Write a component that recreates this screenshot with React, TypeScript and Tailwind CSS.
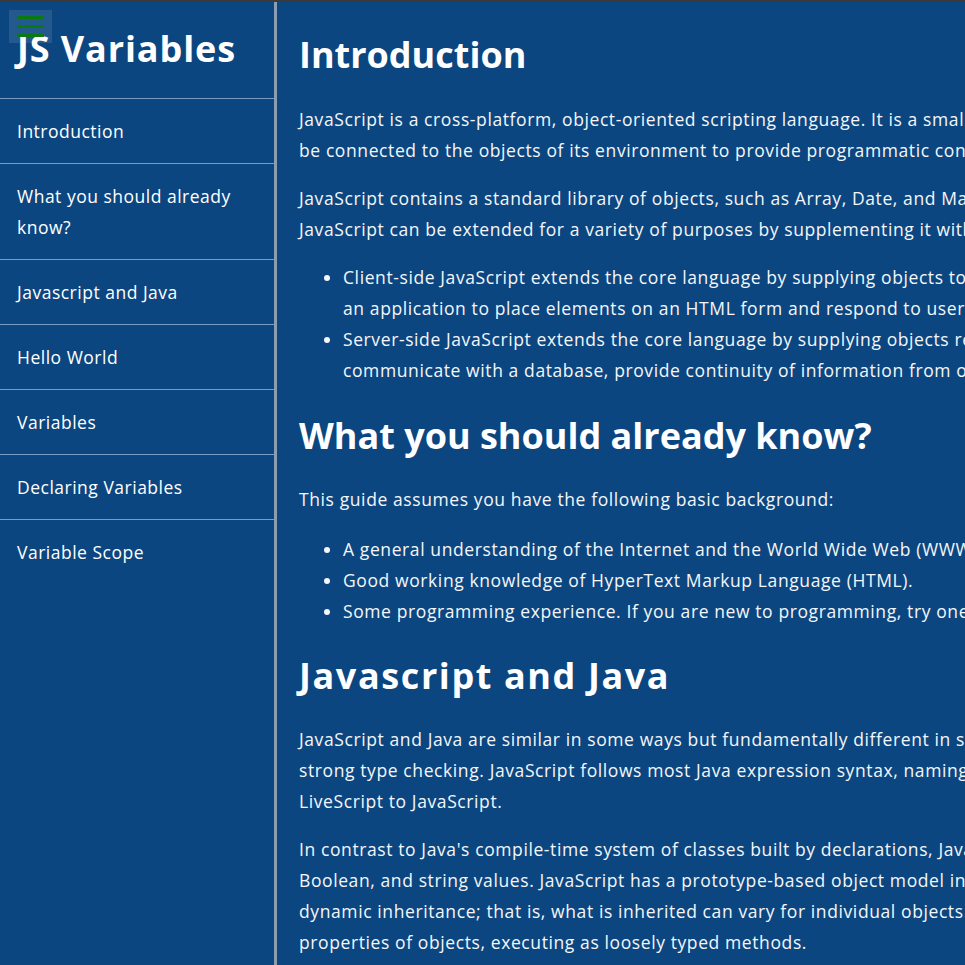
const navItems = [
  "Introduction",
  "What you should already know?",
  "Javascript and Java",
  "Hello World",
  "Variables",
  "Declaring Variables",
  "Variable Scope",
];

// each string is one rendered line; the page is wider than the window
const intro = [
  [
    "JavaScript is a cross-platform, object-oriented scripting language. It is a small and lightweight language. Inside a host environment (for example, a web browser), JavaScript can",
    "be connected to the objects of its environment to provide programmatic control over them.",
  ],
  [
    "JavaScript contains a standard library of objects, such as Array, Date, and Math, and a core set of language elements such as operators, control structures, and statements. Core",
    "JavaScript can be extended for a variety of purposes by supplementing it with additional objects; for example:",
  ],
];

const introList = [
  [
    "Client-side JavaScript extends the core language by supplying objects to control a browser and its Document Object Model (DOM). For example, client-side extensions allow",
    "an application to place elements on an HTML form and respond to user events such as mouse clicks, form input, and page navigation.",
  ],
  [
    "Server-side JavaScript extends the core language by supplying objects relevant to running JavaScript on a server. For example, server-side extensions allow an application to",
    "communicate with a database, provide continuity of information from one invocation to another of the application, or perform file manipulations on a server.",
  ],
];

const knowList = [
  "A general understanding of the Internet and the World Wide Web (WWW).",
  "Good working knowledge of HyperText Markup Language (HTML).",
  "Some programming experience. If you are new to programming, try one of the tutorials linked on the main page about JavaScript.",
];

const javaParas = [
  [
    "JavaScript and Java are similar in some ways but fundamentally different in some others. The JavaScript language resembles Java but does not have Java's static typing and",
    "strong type checking. JavaScript follows most Java expression syntax, naming conventions and basic control-flow constructs which was the reason why it was renamed from",
    "LiveScript to JavaScript.",
  ],
  [
    "In contrast to Java's compile-time system of classes built by declarations, JavaScript supports a runtime system based on a small number of data types representing numeric,",
    "Boolean, and string values. JavaScript has a prototype-based object model instead of the more common class-based object model. The prototype-based model provides",
    "dynamic inheritance; that is, what is inherited can vary for individual objects. JavaScript also supports functions without any special declarative requirements. Functions can be",
    "properties of objects, executing as loosely typed methods.",
  ],
];

function Lines({ lines }: { lines: string[] }) {
  return (
    <>
      {lines.map((l) => (
        <span key={l} className="block whitespace-nowrap">
          {l}
        </span>
      ))}
    </>
  );
}

function Para({ lines, className = "" }: { lines: string[]; className?: string }) {
  return (
    <p className={className}>
      <Lines lines={lines} />
    </p>
  );
}

export default function App() {
  return (
    <div
      className="flex h-[965px] overflow-hidden border-t-2 border-[#3a3a3a] bg-[#0c4680] text-[17.5px] leading-[31px] tracking-[0.6px] text-[#f4f6f9]"
      style={{ fontFamily: '"Open Sans", Arial, sans-serif' }}
    >
      <aside className="relative w-[277px] shrink-0 border-r-[3px] border-[#8d9db1] tracking-[0.5px]">
        <button className="absolute left-[9px] top-[8px] flex h-[33px] w-[43px] flex-col items-center justify-center gap-[6px] bg-white/10">
          <span className="h-[3px] w-[27px] bg-[#087a10]" />
          <span className="h-[3px] w-[27px] bg-[#087a10]" />
          <span className="h-[3px] w-[27px] bg-[#087a10]" />
        </button>
        <h1 className="flex h-[96px] items-center pl-[17px] pb-[2px] text-[36px] font-bold leading-none tracking-[0.9px] text-white">
          JS Variables
        </h1>
        <nav>
          {navItems.map((item) => (
            <a
              key={item}
              href="#"
              className="block border-t border-[#7a9cc2] py-[16.5px] pl-[17px] pr-[20px] text-white"
            >
              {item}
            </a>
          ))}
        </nav>
      </aside>

      <main className="min-w-0 flex-1 overflow-hidden pl-[22px]">
        <h2 className="mt-[31px] text-[36px] font-bold leading-[44px] tracking-normal text-white">
          Introduction
        </h2>
        <Para lines={intro[0]} className="mt-[27px]" />
        <Para lines={intro[1]} className="mt-[17px]" />
        <ul className="mt-[17px] list-disc pl-[44px]">
          {introList.map((l) => (
            <li key={l[0]}>
              <Lines lines={l} />
            </li>
          ))}
        </ul>

        <h2 className="mt-[28px] text-[36px] font-bold leading-[44px] tracking-normal text-white">
          What you should already know?
        </h2>
        <p className="mt-[26px] whitespace-nowrap">
          This guide assumes you have the following basic background:
        </p>
        <ul className="mt-[19px] list-disc pl-[44px]">
          {knowList.map((l) => (
            <li key={l} className="whitespace-nowrap">
              {l}
            </li>
          ))}
        </ul>

        <h2 className="mt-[27px] text-[36px] font-bold leading-[44px] tracking-[1.6px] text-white">
          Javascript and Java
        </h2>
        <Para lines={javaParas[0]} className="mt-[26px]" />
        <Para lines={javaParas[1]} className="mt-[17px]" />
      </main>
    </div>
  );
}
